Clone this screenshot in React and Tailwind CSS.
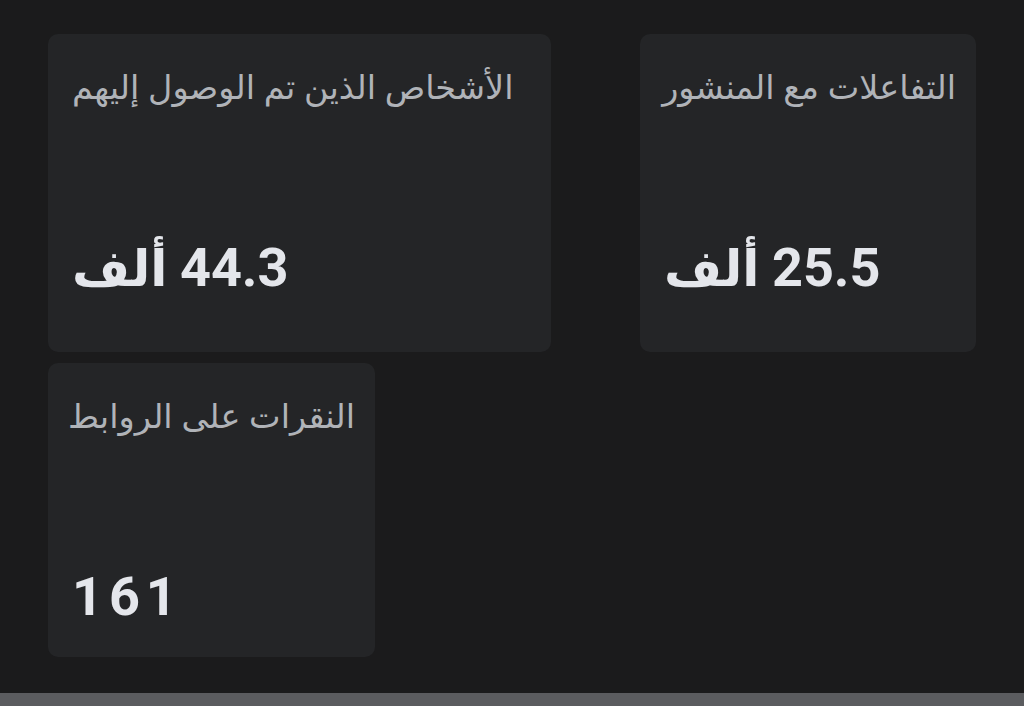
import React from 'react';

const stats = [
  { id: 'reach', title: 'الأشخاص الذين تم الوصول إليهم', number: '44.3', unit: 'ألف', width: 'w-[503px]', height: 'h-[318px]' },
  { id: 'engagement', title: 'التفاعلات مع المنشور', number: '25.5', unit: 'ألف', width: 'w-[336px]', height: 'h-[318px]' },
  { id: 'clicks', title: 'النقرات على الروابط', number: '161', unit: null, width: 'w-[327px]', height: 'h-[294px]' },
];

const StatCard = ({ title, number, unit, width, height }) => (
  <div
    dir="rtl"
    className={`${width} ${height} flex flex-col rounded-[10px] bg-[#242527] pl-6 pr-5 pt-[32px]`}
  >
    <div className="text-left text-[33.5px] leading-[40px] font-medium text-[#b0b3b8] font-['Noto_Sans','DejaVu_Sans',sans-serif] whitespace-nowrap">
      {title}
    </div>
    <div className="mt-[132px] text-left text-[54px] leading-[60px] font-bold text-[#e4e6eb] font-['Roboto','DejaVu_Sans',sans-serif] whitespace-nowrap">
      <span className="tracking-[0.11em]">{number}</span>
      {unit && <span className="text-[50px]"> {unit}</span>}
    </div>
  </div>
);

const App = () => {
  return (
    <div className="flex h-[706px] w-full flex-col bg-[#1b1b1c]">
      <div className="flex flex-1 flex-wrap content-start justify-between gap-y-[11px] px-12 pt-[34px]">
        {stats.map((s) => (
          <StatCard key={s.id} {...s} />
        ))}
      </div>
      <div className="h-[13px] bg-[#5b5c5f]" />
    </div>
  );
};

export default App;
